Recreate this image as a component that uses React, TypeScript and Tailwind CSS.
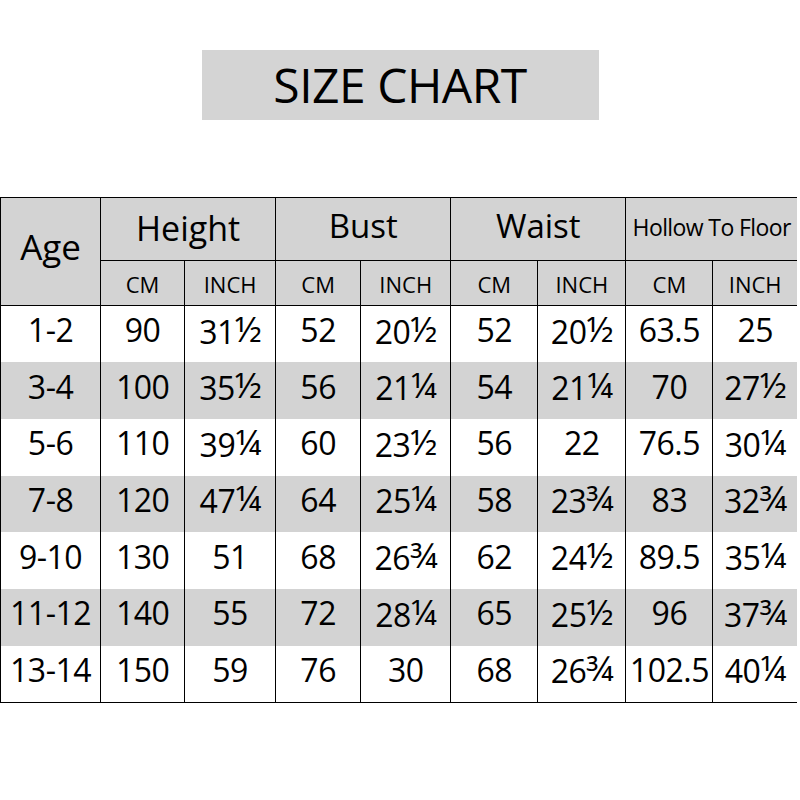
import React from 'react';

const rows: string[][] = [
  ['1-2', '90', '31½', '52', '20½', '52', '20½', '63.5', '25'],
  ['3-4', '100', '35½', '56', '21¼', '54', '21¼', '70', '27½'],
  ['5-6', '110', '39¼', '60', '23½', '56', '22', '76.5', '30¼'],
  ['7-8', '120', '47¼', '64', '25¼', '58', '23¾', '83', '32¾'],
  ['9-10', '130', '51', '68', '26¾', '62', '24½', '89.5', '35¼'],
  ['11-12', '140', '55', '72', '28¼', '65', '25½', '96', '37¾'],
  ['13-14', '150', '59', '76', '30', '68', '26¾', '102.5', '40¼'],
];

const widths = [100, 84, 91, 85, 90, 87, 88, 87, 84];

// ½ ¼ ¾ drawn a little larger, like the reference's font
const Cell = ({ text }: { text: string }) => {
  const m = text.match(/^(\d+)([½¼¾])$/);
  if (!m) return <>{text}</>;
  return (
    <>
      {m[1]}
      <span className="relative -top-[2px] text-[35px] leading-none">{m[2]}</span>
    </>
  );
};

export default function App() {
  return (
    <div className="w-[800px] h-[800px] bg-white overflow-hidden text-black font-['Open_Sans',sans-serif]">
      <div className="pt-[50px] flex justify-center">
        <div className="w-[397px] h-[70px] bg-[#d4d4d4] flex items-center justify-center text-[48px] font-medium leading-none tracking-[-0.5px]">
          SIZE CHART
        </div>
      </div>
      <table className="mt-[77px] border-collapse table-fixed w-[797px]">
        <colgroup>
          {widths.map((w, i) => (
            <col key={i} style={{ width: w }} />
          ))}
        </colgroup>
        <thead>
          <tr className="h-[63px] bg-[#d3d3d3]">
            <th rowSpan={2} className="border border-black font-normal text-[35px] pb-[8px]">Age</th>
            <th colSpan={2} className="border border-black font-normal text-[34px] pb-[2px]">Height</th>
            <th colSpan={2} className="border border-black font-normal text-[33px] pb-[6px]">Bust</th>
            <th colSpan={2} className="border border-black font-normal text-[33px] pb-[6px]">Waist</th>
            <th colSpan={2} className="border-y border-l border-black font-normal text-[23px] whitespace-nowrap tracking-[-0.6px] pb-[4px]">Hollow To Floor</th>
          </tr>
          <tr className="h-[45px] bg-[#d3d3d3]">
            {['CM', 'INCH', 'CM', 'INCH', 'CM', 'INCH', 'CM', 'INCH'].map((t, i) => (
              <th key={i} className={`border-y border-l border-black font-normal text-[22px] pt-[2px] ${i < 7 ? 'border-r' : ''}`}>{t}</th>
            ))}
          </tr>
        </thead>
        <tbody>
          {rows.map((r, ri) => (
            <tr key={ri} className={`h-[56.7px] ${ri % 2 === 1 ? 'bg-[#d3d3d3]' : 'bg-white'}`}>
              {r.map((c, ci) => (
                <td
                  key={ci}
                  className={`border-y border-l border-black text-center text-[32px] leading-none whitespace-nowrap tracking-[-0.5px] pb-[8px] ${ci < 8 ? 'border-r' : ''} ${ri === 6 ? '' : 'border-b-0'} ${ri === 0 ? '' : 'border-t-0'}`}
                >
                  <Cell text={c} />
                </td>
              ))}
            </tr>
          ))}
        </tbody>
      </table>
    </div>
  );
}
